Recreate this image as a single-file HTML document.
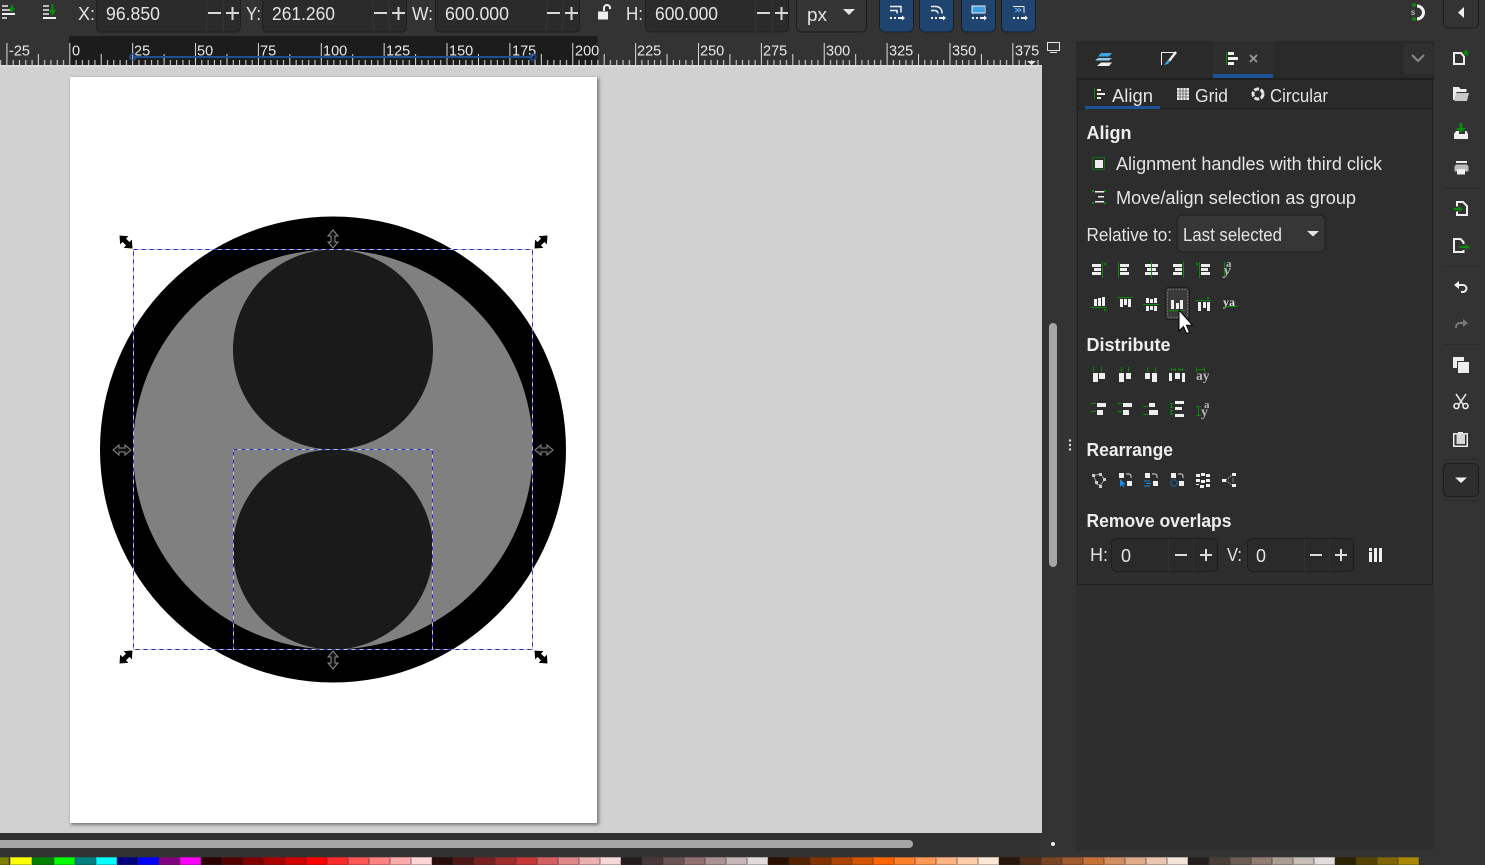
<!DOCTYPE html>
<html lang="en"><head><meta charset="utf-8"><title>Inkscape Align</title>
<style>
html,body{margin:0;padding:0;width:1485px;height:865px;overflow:hidden;background:#333}
svg{position:absolute;left:0;top:0;display:block}
text{font-family:"Liberation Sans",sans-serif;fill:#e4e4e4;font-size:18px}
.b{font-weight:bold;fill:#ededed}
.r{font-size:14.5px;fill:#e8e8e8}
.sr{font-family:"Liberation Serif",serif;fill:#b5b5b5;font-weight:bold}
#pal{position:absolute;top:857px;left:0;height:8px;width:1485px}
#pal i{position:absolute;top:0;height:8px;width:21px;box-shadow:inset 0 0 0 1px rgba(50,50,50,.3)}
#row{position:absolute;left:54px;top:0;height:8px;display:flex}
#row b{display:block;width:21px;height:8px;box-shadow:inset 0 0 0 1px rgba(50,50,50,.3)}
</style></head><body>
<svg width="1485" height="865" viewBox="0 0 1485 865" xmlns="http://www.w3.org/2000/svg">
<defs>
<pattern id="tk" patternUnits="userSpaceOnUse" x="69.3" y="36" width="62.87" height="29">
<g fill="#dcdcdc">
<rect x="0" y="7" width="1" height="22"/><rect x="6.29" y="24" width="1" height="5"/><rect x="12.57" y="24" width="1" height="5"/><rect x="18.86" y="24" width="1" height="5"/><rect x="25.15" y="24" width="1" height="5"/><rect x="31.43" y="18" width="1" height="11"/><rect x="37.72" y="24" width="1" height="5"/><rect x="44" y="24" width="1" height="5"/><rect x="50.3" y="24" width="1" height="5"/><rect x="56.6" y="24" width="1" height="5"/>
</g></pattern>
<path id="dbl" d="M-9 0L-3 -5L-3 -2L3 -2L3 -5L9 0L3 5L3 2L-3 2L-3 5Z"/>
<filter id="sh" x="-5%" y="-5%" width="110%" height="110%"><feGaussianBlur stdDeviation="1.500"/></filter>
</defs>

<!-- base -->
<rect width="1485" height="865" fill="#333"/>

<!-- top toolbar left icons -->
<g fill="#bdbdbd"><rect x="2" y="5" width="6" height="2"/><rect x="2" y="9" width="10" height="2"/><rect x="2" y="17" width="5" height="2"/></g>
<rect x="2" y="13" width="13" height="2" fill="#f0f0f0"/>
<path d="M12 5v5M10 8l2 3 2-3" stroke="#0a8a0a" stroke-width="2" fill="none"/>
<g fill="#bdbdbd"><rect x="43" y="5" width="6" height="2"/><rect x="43" y="9" width="6" height="2"/><rect x="43" y="13" width="6" height="2"/></g>
<rect x="43" y="17" width="13" height="2" fill="#f0f0f0"/>
<path d="M52.500 4v9M50 10l2.500 4 2.500-4" stroke="#0a8a0a" stroke-width="2" fill="none"/>

<!-- spin fields -->
<g fill="#2b2b2b" stroke="#1f1f1f">
<rect x="96.500" y="-8" width="144" height="40" rx="5"/>
<rect x="262.500" y="-8" width="144" height="40" rx="5"/>
<rect x="435.500" y="-8" width="144" height="40" rx="5"/>
<rect x="645.500" y="-8" width="143" height="40" rx="5"/>
</g>
<rect x="796.500" y="-8" width="70" height="40" rx="5" fill="#353535" stroke="#1c1c1c"/>
<g stroke="#333"><path d="M206.500 0V32M223.500 0V32M373.500 0V32M389.500 0V32M546.500 0V32M562.500 0V32M755.500 0V32M772.500 0V32"/></g>
<g stroke="#d8d8d8" stroke-width="2" fill="none">
<path d="M208 13h13M226 13h13M232.500 7v13M374 13h13M392 13h13M398.500 7v13M547 13h13M565 13h13M571.500 7v13M757 13h13M775 13h13M781.500 7v13"/>
</g>
<text x="78" y="20" textLength="17" lengthAdjust="spacingAndGlyphs">X:</text>
<text x="106" y="20" textLength="54" lengthAdjust="spacingAndGlyphs">96.850</text>
<text x="246" y="20" textLength="15" lengthAdjust="spacingAndGlyphs">Y:</text>
<text x="272" y="20" textLength="63" lengthAdjust="spacingAndGlyphs">261.260</text>
<text x="412" y="20" textLength="21" lengthAdjust="spacingAndGlyphs">W:</text>
<text x="445" y="20" textLength="64" lengthAdjust="spacingAndGlyphs">600.000</text>
<text x="626" y="20" textLength="17" lengthAdjust="spacingAndGlyphs">H:</text>
<text x="655" y="20" textLength="63" lengthAdjust="spacingAndGlyphs">600.000</text>
<text x="807" y="21" textLength="20" lengthAdjust="spacingAndGlyphs">px</text>
<path d="M843 9h12l-6 6z" fill="#e4e4e4"/>
<!-- lock -->
<path d="M598 11.500h10v8h-10z" fill="#f0f0f0"/>
<path d="M604 11V8a3 3 0 0 1 6 0v1" stroke="#f0f0f0" stroke-width="2" fill="none"/>

<!-- blue snap buttons -->
<g fill="#1f4470" stroke="#16202c">
<rect x="879.500" y="-8" width="34" height="40" rx="5"/>
<rect x="919.500" y="-8" width="34" height="40" rx="5"/>
<rect x="961.500" y="-8" width="34" height="40" rx="5"/>
<rect x="1001.500" y="-8" width="34" height="40" rx="5"/>
</g>
<g fill="none" stroke="#f2f2f2" stroke-width="1.500">
<path d="M890 6.500h11v6M890 10.500h7v3"/>
<path d="M931 6.500h5a6 6 0 0 1 6 6v1M931 10.500h4a3 3 0 0 1 3 3"/>
</g>
<path d="M1013 6.500h11V13" stroke="#eee" fill="none"/>
<rect x="972" y="6" width="12" height="7" fill="#3aa0e0"/><rect x="972" y="6" width="13" height="7" fill="none" stroke="#eee"/>
<path d="M1015 8l3 2-3 2M1018 8l3 2-3 2" stroke="#6cb8f0" fill="none"/>
<g fill="#f2f2f2" stroke="none">
<path d="M890 17h2v2h-2zM894 17h2v2h-2zM898 17h4v-1.500l3 2.500-3 2.500V19h-4z"/>
<path d="M931 17h2v2h-2zM935 17h2v2h-2zM939 17h4v-1.500l3 2.500-3 2.500V19h-4z"/>
<path d="M972 17h2v2h-2zM976 17h2v2h-2zM980 17h4v-1.500l3 2.500-3 2.500V19h-4z"/>
<path d="M1013 17h2v2h-2zM1017 17h2v2h-2zM1021 17h4v-1.500l3 2.500-3 2.500V19h-4z"/>
</g>

<!-- magnet + collapse -->
<path d="M1417 6a6.500 6.500 0 0 1 0 13" stroke="#f2f2f2" stroke-width="3" fill="none"/>
<rect x="1412" y="3.500" width="4" height="3" fill="#0a8a0a"/><rect x="1412" y="17.500" width="4" height="3" fill="#0a8a0a"/>
<text x="1411" y="15" style="font-size:8px">s</text>
<rect x="1443.500" y="-8" width="35" height="36" rx="5" fill="#333" stroke="#1c1c1c"/>
<path d="M1458 12.500l6-5.500v11z" fill="#eee"/>

<!-- canvas -->
<rect x="0" y="65" width="1042" height="768" fill="#d1d1d1"/>
<rect x="71" y="78" width="528" height="747" fill="#777" filter="url(#sh)"/>
<rect x="70" y="77" width="527" height="746" fill="#fff"/>
<circle cx="333" cy="449.500" r="233" fill="#000"/>
<circle cx="333" cy="449.500" r="200" fill="#808080"/>
<circle cx="333" cy="349.500" r="100" fill="#1a1a1a"/>
<circle cx="333" cy="549.500" r="100" fill="#1a1a1a"/>
<g fill="none" stroke-width="1">
<rect x="133.500" y="249.500" width="399" height="400" stroke="#c4c4c4" stroke-dasharray="4 4" stroke-dashoffset="4"/>
<rect x="133.500" y="249.500" width="399" height="400" stroke="#2a2ad0" stroke-dasharray="4 4"/>
<rect x="233.500" y="449.500" width="199" height="200" stroke="#c4c4c4" stroke-dasharray="4 4" stroke-dashoffset="4"/>
<rect x="233.500" y="449.500" width="199" height="200" stroke="#2a2ad0" stroke-dasharray="4 4"/>
</g>
<!-- handles -->
<g fill="#000" stroke="#000" stroke-width=".8">
<use href="#dbl" transform="translate(126 242) rotate(45) scale(.95 1)"/>
<use href="#dbl" transform="translate(541 242) rotate(-45) scale(.95 1)"/>
<use href="#dbl" transform="translate(126 657) rotate(-45) scale(.95 1)"/>
<use href="#dbl" transform="translate(541 657) rotate(45) scale(.95 1)"/>
</g>
<g fill="#111" stroke="#8c8c8c" stroke-width="1">
<use href="#dbl" transform="translate(333 239) rotate(90)"/>
<use href="#dbl" transform="translate(333 660) rotate(90)"/>
<use href="#dbl" transform="translate(122 450)"/>
<use href="#dbl" transform="translate(544 450)"/>
</g>

<!-- ruler -->
<rect x="0" y="36" width="1042" height="29" fill="#333"/>
<rect x="69" y="36" width="528.500" height="29" fill="#1c1c1c"/>
<rect x="0" y="36" width="1042" height="29" fill="url(#tk)"/>
<rect x="0" y="65" width="1042" height="2" fill="#e0e0e0" opacity=".6"/>
<text class="r" x="9" y="55.500">-25</text><text class="r" x="72" y="55.500">0</text><text class="r" x="134" y="55.500">25</text><text class="r" x="197" y="55.500">50</text><text class="r" x="260" y="55.500">75</text><text class="r" x="323" y="55.500">100</text><text class="r" x="386" y="55.500">125</text><text class="r" x="449" y="55.500">150</text><text class="r" x="512" y="55.500">175</text><text class="r" x="575" y="55.500">200</text><text class="r" x="637" y="55.500">225</text><text class="r" x="700" y="55.500">250</text><text class="r" x="763" y="55.500">275</text><text class="r" x="826" y="55.500">300</text><text class="r" x="889" y="55.500">325</text><text class="r" x="952" y="55.500">350</text><text class="r" x="1015" y="55.500">375</text>
<rect x="133" y="56" width="400" height="2" fill="#1f4f92"/>
<circle cx="133" cy="57" r="3" fill="none" stroke="#1f4f92" stroke-width="1.500"/>
<circle cx="533" cy="57" r="3" fill="none" stroke="#1f4f92" stroke-width="1.500"/>
<path d="M1027 61h9l-4.500 4z" fill="#e4e4e4"/>

<!-- display icon + scrollbars -->
<rect x="1047.500" y="42.500" width="12" height="8" fill="none" stroke="#e8e8e8"/>
<rect x="1050" y="52" width="7" height="1" fill="#e8e8e8"/>
<rect x="1049" y="323" width="8" height="244" rx="4" fill="#a6a6a6"/>
<rect x="0" y="833" width="1042" height="24" fill="#323232"/>
<rect x="-8" y="840" width="921" height="8" rx="4" fill="#a6a6a6"/>
<circle cx="1053" cy="844" r="2" fill="#eee"/>
<g fill="#ddd"><circle cx="1070" cy="440.500" r="1.200"/><circle cx="1070" cy="445" r="1.200"/><circle cx="1070" cy="449.500" r="1.200"/></g>

<!-- dock panel -->
<rect x="1076" y="41" width="358" height="809" fill="#2e2e2e"/>
<rect x="1076" y="41" width="358" height="37" fill="#2a2a2a"/>
<rect x="1213" y="41" width="60" height="37" fill="#2e2e2e"/>
<rect x="1213" y="74" width="60" height="4" fill="#1c5296"/>
<rect x="1076" y="78" width="358" height="1" fill="#1e1e1e"/>
<rect x="1403" y="44" width="30" height="30" rx="4" fill="#303030"/>
<path d="M1412 55l6 6 6-6" stroke="#8a8a8a" stroke-width="2" fill="none"/>
<!-- tab icons -->
<path d="M1101 53h11l-3 3.500h-11z" fill="#3aa5e0"/>
<path d="M1098 58h14l-3 2.500h-14z" fill="#8fc8ea"/>
<path d="M1101 62.500h11l-3 3.500h-12z" fill="#f0f0f0"/>
<path d="M1161.500 65V52.500h13" stroke="#eee" stroke-width="1" fill="none"/>
<path d="M1176 52l-7 9" stroke="#eee" stroke-width="2.500"/>
<path d="M1168 60l-4 5 4-1 2-3z" fill="#3aa5e0"/>
<rect x="1226" y="52" width="1" height="13" fill="#0a8a0a"/>
<g fill="#f0f0f0"><rect x="1228" y="52" width="6" height="3"/><rect x="1228" y="57" width="10" height="3"/><rect x="1228" y="62" width="6" height="3"/></g>
<path d="M1250 55l7 7M1257 55l-7 7" stroke="#999" stroke-width="1.800"/>
<!-- panel frame -->
<rect x="1077.500" y="79.500" width="355" height="505" fill="#2d2d2d" stroke="#1f1f1f"/>
<rect x="1078" y="80" width="354" height="28" fill="#2a2a2a"/>
<rect x="1078" y="108" width="354" height="1" fill="#1f1f1f"/>
<rect x="1085" y="106" width="75" height="3" fill="#1c5296"/>
<rect x="1094" y="88" width="1" height="11" fill="#0a8a0a"/>
<g fill="#eee"><rect x="1097" y="89" width="4" height="2"/><rect x="1097" y="93" width="8" height="2"/><rect x="1097" y="97" width="4" height="2"/></g>
<text x="1112" y="102" textLength="41" lengthAdjust="spacingAndGlyphs">Align</text>
<g fill="#e8e8e8"><rect x="1177" y="88" width="12" height="12"/></g>
<path d="M1180 88v12M1183 88v12M1186 88v12M1177 91h12M1177 94h12M1177 97h12" stroke="#2a2a2a" stroke-width=".6"/>
<text x="1195" y="102" textLength="33" lengthAdjust="spacingAndGlyphs">Grid</text>
<circle cx="1258" cy="94" r="5" fill="none" stroke="#e4e4e4" stroke-width="3" stroke-dasharray="5 1.500"/>
<text x="1270" y="102" textLength="58" lengthAdjust="spacingAndGlyphs">Circular</text>

<text class="b" x="1086.500" y="139" textLength="45" lengthAdjust="spacingAndGlyphs">Align</text>
<rect x="1092.500" y="157.500" width="12" height="12" fill="none" stroke="#0a8a0a" stroke-dasharray="2 1"/>
<rect x="1095" y="160" width="8" height="8" fill="#eee"/>
<text x="1116" y="170" textLength="266" lengthAdjust="spacingAndGlyphs">Alignment handles with third click</text>
<g fill="#0a8a0a"><rect x="1092" y="190" width="2" height="2"/><rect x="1104" y="190" width="2" height="2"/><rect x="1092" y="202" width="2" height="2"/><rect x="1104" y="202" width="2" height="2"/></g>
<g fill="#eee"><rect x="1095" y="191" width="9" height="1.500"/><rect x="1098" y="196" width="6" height="1.500"/><rect x="1095" y="201" width="9" height="1.500"/></g>
<text x="1116" y="204" textLength="240" lengthAdjust="spacingAndGlyphs">Move/align selection as group</text>
<text x="1086.500" y="241" textLength="85.500" lengthAdjust="spacingAndGlyphs">Relative to:</text>
<rect x="1177" y="215" width="148" height="37" rx="5" fill="#363636" stroke="#1e1e1e"/>
<text x="1183" y="241" textLength="99" lengthAdjust="spacingAndGlyphs">Last selected</text>
<path d="M1307 231h12l-6 5.500z" fill="#e4e4e4"/>

<!-- align row 1 -->
<g fill="#0a8a0a">
<rect x="1102" y="262" width="1" height="16"/><rect x="1104" y="263" width="2" height="2"/>
<rect x="1118" y="262" width="1" height="16"/>
<rect x="1183" y="262" width="1" height="16"/>
<rect x="1199" y="262" width="1" height="16"/><rect x="1196" y="263" width="2" height="2"/>
<rect x="1224" y="262" width="1" height="16"/>
</g>
<g fill="#eee">
<rect x="1092" y="264" width="9" height="3"/><rect x="1094" y="268" width="7" height="3"/><rect x="1092" y="272" width="9" height="3"/>
<rect x="1120" y="264" width="9" height="3"/><rect x="1120" y="268" width="7" height="3"/><rect x="1120" y="272" width="9" height="3"/>
<rect x="1145" y="264" width="13" height="3"/><rect x="1147" y="268" width="9" height="3"/><rect x="1145" y="272" width="13" height="3"/>
<rect x="1173" y="264" width="9" height="3"/><rect x="1175" y="268" width="7" height="3"/><rect x="1173" y="272" width="9" height="3"/>
<rect x="1201" y="264" width="9" height="3"/><rect x="1201" y="268" width="7" height="3"/><rect x="1201" y="272" width="9" height="3"/>
</g>
<rect x="1151" y="262" width="1" height="16" fill="#0a8a0a"/>
<text class="sr" x="1226" y="267" style="font-size:11px">a</text>
<text class="sr" x="1224" y="275" style="font-size:15px;font-style:italic">y</text>

<!-- align row 2 -->
<rect x="1165.500" y="287.500" width="24" height="32" rx="3" fill="#3a3a3a" stroke="#1c1c1c"/>
<rect x="1167.500" y="289.500" width="20" height="28" rx="2" fill="none" stroke="#777" stroke-dasharray="1.500 1.500"/>
<g fill="#0a8a0a">
<rect x="1091" y="307" width="16" height="1"/><rect x="1104" y="309" width="2" height="2"/>
<rect x="1117" y="297" width="16" height="1"/>
<rect x="1143" y="304" width="16" height="1"/>
<rect x="1169" y="310" width="16" height="1.200"/>
<rect x="1195" y="300" width="16" height="1"/><rect x="1207" y="297" width="2" height="2"/>
<rect x="1224" y="306" width="14" height="1"/>
</g>
<g fill="#eee">
<rect x="1094" y="299" width="3" height="7"/><rect x="1098" y="298" width="3" height="8"/><rect x="1102" y="297" width="3" height="9"/>
<rect x="1120" y="299" width="3" height="8"/><rect x="1124" y="299" width="3" height="6"/><rect x="1128" y="299" width="3" height="8"/>
<rect x="1146" y="298" width="3" height="5"/><rect x="1150" y="299" width="3" height="4"/><rect x="1154" y="298" width="3" height="5"/>
<rect x="1146" y="306" width="3" height="5"/><rect x="1150" y="306" width="3" height="4"/><rect x="1154" y="306" width="3" height="5"/>
<rect x="1171" y="300" width="3" height="9"/><rect x="1176" y="303" width="3" height="6"/><rect x="1180" y="300" width="3" height="9"/>
<rect x="1198" y="302" width="3" height="9"/><rect x="1203" y="302" width="3" height="6"/><rect x="1207" y="302" width="3" height="9"/>
</g>
<text class="sr" x="1223" y="306" style="font-size:12px;fill:#ddd">ya</text>
<!-- cursor -->
<path d="M1179 310v21l4.500-4.500 3 7 3-1.200-3-7h6z" fill="#fff" stroke="#000" stroke-width="1"/>

<!-- distribute -->
<text class="b" x="1086.500" y="351" textLength="84" lengthAdjust="spacingAndGlyphs">Distribute</text>
<g fill="#0a8a0a">
<rect x="1093" y="367" width="1" height="5"/><rect x="1101" y="367" width="1" height="5"/>
<rect x="1121" y="367" width="1" height="5"/><rect x="1128" y="367" width="1" height="5"/>
<rect x="1147" y="367" width="1" height="5"/><rect x="1155" y="367" width="1" height="5"/>
<path d="M1171 369h5v1h-5zM1171 368h1v3h-1zM1175 368h1v3h-1zM1178 369h5v1h-5zM1178 368h1v3h-1zM1182 368h1v3h-1z"/>
<path d="M1196 369h9v1h-9zM1196 367h1v5h-1zM1204 367h1v5h-1z"/>
</g>
<g fill="#eee">
<rect x="1093" y="373" width="5" height="9"/><rect x="1099" y="373" width="6" height="6"/>
<rect x="1119" y="373" width="5" height="9"/><rect x="1126" y="373" width="5" height="6"/>
<rect x="1145" y="373" width="5" height="6"/><rect x="1152" y="373" width="5" height="9"/>
<rect x="1169" y="373" width="3" height="8"/><rect x="1175" y="373" width="5" height="6"/><rect x="1182" y="373" width="3" height="9"/>
</g>
<text class="sr" x="1196" y="380" style="font-size:13.500px">ay</text>
<g fill="#0a8a0a">
<rect x="1091" y="403" width="5" height="1"/><rect x="1091" y="411" width="5" height="1"/>
<rect x="1117" y="403" width="5" height="1"/><rect x="1117" y="411" width="5" height="1"/>
<rect x="1143" y="406" width="5" height="1"/><rect x="1143" y="414" width="5" height="1"/>
<path d="M1171 403h1v5h-1zM1170 403h3v1h-3zM1170 407h3v1h-3zM1171 410h1v5h-1zM1170 410h3v1h-3zM1170 414h3v1h-3z"/>
<path d="M1198 406h1v9h-1zM1196 406h5v1h-5zM1196 415h5v1h-5z"/>
</g>
<g fill="#eee">
<rect x="1097" y="403" width="9" height="4"/><rect x="1097" y="410" width="6" height="5"/>
<rect x="1123" y="403" width="9" height="4"/><rect x="1123" y="410" width="6" height="5"/>
<rect x="1149" y="403" width="6" height="4"/><rect x="1149" y="410" width="9" height="5"/>
<rect x="1175" y="401" width="9" height="3"/><rect x="1175" y="407" width="7" height="3"/><rect x="1175" y="414" width="9" height="3"/>
</g>
<text class="sr" x="1204" y="408" style="font-size:11px">a</text>
<text class="sr" x="1201" y="416" style="font-size:14px">y</text>

<!-- rearrange -->
<text class="b" x="1086.500" y="456" textLength="86.500" lengthAdjust="spacingAndGlyphs">Rearrange</text>
<path d="M1093.500 475.500l7-1.500 4 5.500-4 5.500-3.500-.5-1-3z" fill="none" stroke="#999" stroke-width="1"/>
<g fill="#ccc"><rect x="1092" y="474" width="3" height="3"/><rect x="1099" y="473" width="3" height="3"/><rect x="1103" y="478" width="3" height="3"/><rect x="1099" y="485" width="3" height="3"/><rect x="1095" y="481" width="3" height="3"/></g>
<g fill="#eee">
<rect x="1119" y="473" width="5" height="5"/><rect x="1127" y="481" width="5" height="5"/>
<rect x="1145" y="473" width="5" height="5"/><rect x="1153" y="481" width="5" height="5"/>
<rect x="1171" y="473" width="5" height="5"/><rect x="1179" y="481" width="5" height="5"/>
</g>
<path d="M1120 479l0 8 2-2 1.500 2.500 1-.5-1.500-2.500h3z" fill="#1c8ce0"/>
<path d="M1144 481h6M1146 483.500h5M1144 486h6" stroke="#1c8ce0" stroke-width="1"/>
<circle cx="1174" cy="483" r="3.200" fill="none" stroke="#1c6cb0" stroke-width="1.500" stroke-dasharray="1.500 1"/>
<path d="M1126 474h3a2 2 0 0 1 2 2v2M1152 474h3a2 2 0 0 1 2 2v2M1178 474h3a2 2 0 0 1 2 2v2" fill="none" stroke="#ddd"/>
<g fill="#eee">
<rect x="1196" y="474" width="4" height="3"/><rect x="1201" y="473" width="4" height="3"/><rect x="1206" y="474" width="4" height="3"/>
<rect x="1196" y="479" width="4" height="3"/><rect x="1206" y="479" width="4" height="3"/><rect x="1201" y="480" width="4" height="3"/>
<rect x="1200" y="485" width="4" height="3"/><rect x="1196" y="484" width="3" height="1"/><rect x="1206" y="484" width="4" height="3"/>
<rect x="1222" y="479" width="4" height="3"/><rect x="1232" y="473" width="4" height="3"/><rect x="1232" y="484" width="4" height="3"/>
</g>
<path d="M1226 480l6-5M1226 481l6 4M1233 478v4" stroke="#bbb" stroke-width=".8" stroke-dasharray="1.500 1" fill="none"/>

<!-- remove overlaps -->
<text class="b" x="1086.500" y="527" textLength="145" lengthAdjust="spacingAndGlyphs">Remove overlaps</text>
<text x="1090" y="561" textLength="18" lengthAdjust="spacingAndGlyphs">H:</text>
<rect x="1111.500" y="538.500" width="106" height="33" rx="5" fill="#2a2a2a" stroke="#1e1e1e"/>
<path d="M1168.500 539v32M1193.500 539v32" stroke="#333"/>
<text x="1121" y="562">0</text>
<text x="1227" y="561" textLength="15" lengthAdjust="spacingAndGlyphs">V:</text>
<rect x="1247.500" y="538.500" width="106" height="33" rx="5" fill="#2a2a2a" stroke="#1e1e1e"/>
<path d="M1304.500 539v32M1329.500 539v32" stroke="#333"/>
<text x="1256" y="562">0</text>
<path d="M1175 555h12M1200 555h12M1206 549v12M1310 555h12M1335 555h12M1341 549v12" stroke="#dcdcdc" stroke-width="2" fill="none"/>
<g fill="#eee"><rect x="1369" y="552" width="3" height="10"/><rect x="1369" y="548" width="3" height="3"/><rect x="1374" y="548" width="3" height="14"/><rect x="1379" y="548" width="3" height="14"/></g>

<!-- right toolbar -->
<g stroke="#2a2a2a"><path d="M1443 188.500h36M1443 266.500h36M1443 344.500h36M1443 459.500h36M1443 500.500h36"/></g>
<!-- new -->
<path d="M1454 53h7l3 3.500V64h-10z" fill="none" stroke="#eee" stroke-width="2"/>
<path d="M1466 49l1 2.500 2.500.3-2 1.700.7 2.500-2.200-1.300-2.200 1.300.7-2.500-2-1.700 2.500-.3z" fill="#0a8a0a"/>
<!-- open -->
<path d="M1453 87h6l1.500 2h6v3h-10l-2 8h-1.500z" fill="#eee"/>
<path d="M1456 93h13l-2 8h-12.500z" fill="#c8c8c8"/>
<!-- save -->
<path d="M1461 123v7" stroke="#0a8a0a" stroke-width="3"/><path d="M1456 128h10l-5 5z" fill="#0a8a0a"/>
<path d="M1456 131h3v3h6v-3h1.500l1.500 3v5h-14v-5z" fill="#eee"/>
<!-- print -->
<rect x="1456" y="161" width="11" height="2" fill="#eee"/>
<path d="M1456 164.500h11l1.500 2v5h-14v-5z" fill="#bbb"/>
<rect x="1457" y="169" width="8" height="5.500" fill="#eee"/>
<!-- import -->
<path d="M1457 206.500V202h6l4 4v9h-10v-3.500" fill="none" stroke="#eee" stroke-width="2"/>
<path d="M1454 208.500h5v-1.500l3 2-3 2v-1.500h-5z" fill="#0a8a0a" stroke="#0a8a0a"/>
<!-- export -->
<path d="M1463.500 244v-2l-3-3h-6.500v13h9.500v-2" fill="none" stroke="#eee" stroke-width="2"/>
<path d="M1460 246.500h6v-1.500l3 2-3 2v-1.500h-6z" fill="#0a8a0a" stroke="#0a8a0a"/>
<!-- undo / redo -->
<path d="M1456 285h7a3.500 3.500 0 0 1 0 7h-2" fill="none" stroke="#eee" stroke-width="2"/>
<path d="M1459 281l-5 4 5 4z" fill="#eee"/>
<path d="M1466 323h-6a4 4 0 0 0-4 4v1" fill="none" stroke="#777" stroke-width="2"/>
<path d="M1463 319l5 4-5 4z" fill="#777"/>
<!-- copy -->
<rect x="1453" y="357" width="11" height="11" fill="#eee"/>
<rect x="1457.500" y="361.500" width="12" height="12" fill="#eee" stroke="#333"/>
<!-- cut -->
<path d="M1456 394l7.500 11M1466 394l-7.500 11" stroke="#ddd" stroke-width="1.600"/>
<circle cx="1456.500" cy="406" r="2.500" fill="none" stroke="#eee" stroke-width="1.600"/>
<circle cx="1465.500" cy="406" r="2.500" fill="none" stroke="#eee" stroke-width="1.600"/>
<!-- paste -->
<rect x="1453.750" y="433.750" width="13.500" height="12.500" fill="none" stroke="#eee" stroke-width="1.500"/>
<path d="M1456.500 433h7.500l1 1v10h-8.500z" fill="#d6d6d6"/>
<rect x="1458" y="432" width="5" height="2" fill="#eee"/>
<rect x="1443.500" y="463.500" width="35" height="33" rx="5" fill="#2e2e2e" stroke="#1c1c1c"/>
<path d="M1455 477.500h12l-6 5.500z" fill="#eee"/>
</svg>

<div id="pal">
<i style="left:-12px;background:#808000"></i>
<i style="left:10px;width:22px;background:#ff0"></i>
<i style="left:32px;width:22px;background:#008000"></i>
<div id="row">
<b style="background:#0f0"></b><b style="background:#008080"></b><b style="background:#0ff"></b><b style="background:#000080"></b><b style="background:#00f"></b><b style="background:#800080"></b><b style="background:#f0f"></b>
<b style="background:#2b0000"></b><b style="background:#500"></b><b style="background:#800000"></b><b style="background:#a00"></b><b style="background:#d40000"></b><b style="background:#f00"></b><b style="background:#ff2a2a"></b><b style="background:#f55"></b><b style="background:#ff8080"></b><b style="background:#faa"></b><b style="background:#ffd5d5"></b>
<b style="background:#280b0b"></b><b style="background:#501616"></b><b style="background:#782121"></b><b style="background:#a02c2c"></b><b style="background:#c83737"></b><b style="background:#d35f5f"></b><b style="background:#de8787"></b><b style="background:#e9afaf"></b><b style="background:#f4d7d7"></b>
<b style="background:#241c1c"></b><b style="background:#483737"></b><b style="background:#6c5353"></b><b style="background:#916f6f"></b><b style="background:#ac9393"></b><b style="background:#c8b7b7"></b><b style="background:#e3dbdb"></b>
<b style="background:#2b1100"></b><b style="background:#520"></b><b style="background:#803300"></b><b style="background:#a40"></b><b style="background:#d45500"></b><b style="background:#f60"></b><b style="background:#ff7f2a"></b><b style="background:#f95"></b><b style="background:#ffb380"></b><b style="background:#fca"></b><b style="background:#ffe6d5"></b>
<b style="background:#28170b"></b><b style="background:#502d16"></b><b style="background:#784421"></b><b style="background:#a05a2c"></b><b style="background:#c87137"></b><b style="background:#d38d5f"></b><b style="background:#deaa87"></b><b style="background:#e9c6af"></b><b style="background:#f4e3d7"></b>
<b style="background:#241f1c"></b><b style="background:#483e37"></b><b style="background:#6c5d53"></b><b style="background:#917c6f"></b><b style="background:#ac9d93"></b><b style="background:#c8beb7"></b><b style="background:#e3dedb"></b>
<b style="background:#2b2200"></b><b style="background:#540"></b><b style="background:#806600"></b><b style="background:#a80"></b>
</div>
</div>
</body></html>
